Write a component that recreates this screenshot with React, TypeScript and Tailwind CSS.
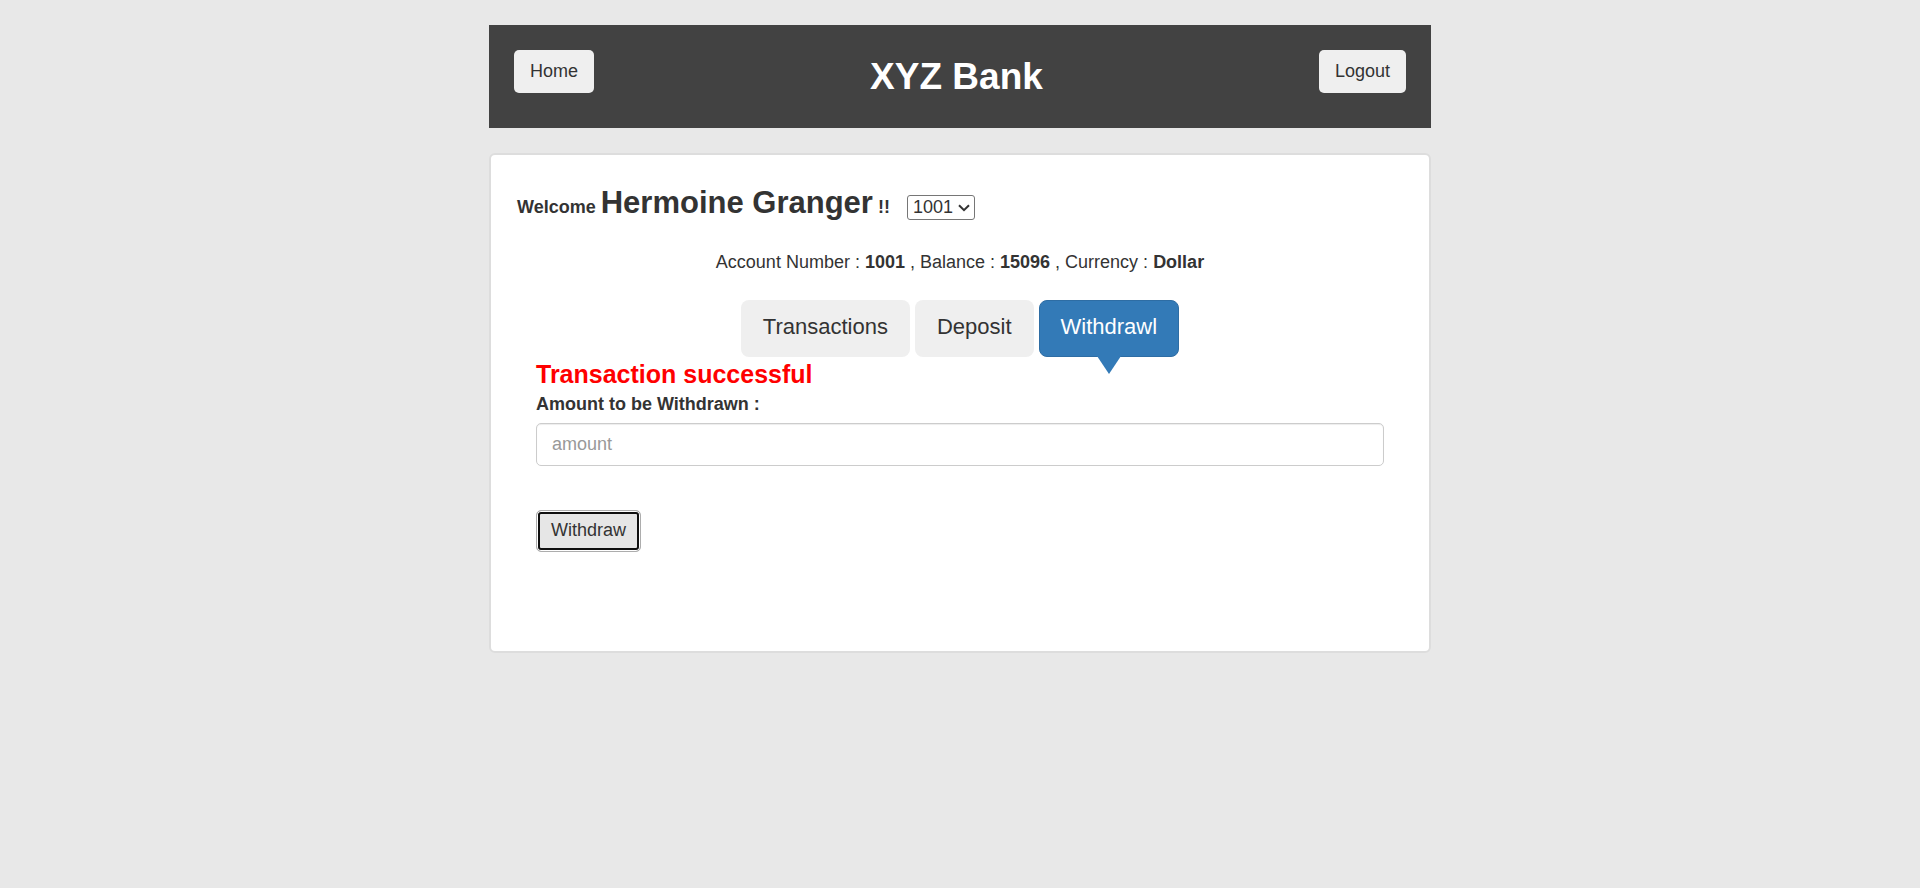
import { useState } from "react";
import clsx from "clsx";

const tabs = ["Transactions", "Deposit", "Withdrawl"];

function HeaderButton({ children }: { children: string }) {
  return (
    <button
      type="button"
      className="h-[43px] cursor-pointer rounded-[5px] bg-[#efefef] px-4 pb-0.5"
    >
      {children}
    </button>
  );
}

function Tab({ label, active, onSelect }: { label: string; active: boolean; onSelect: () => void }) {
  return (
    <button
      type="button"
      onClick={onSelect}
      className={clsx(
        "relative h-[57px] cursor-pointer rounded-lg pb-1 text-[22px]",
        active ? "border border-[#2e6da4] bg-[#337ab7] px-[21px] text-white" : "bg-[#efefef] px-[22px]",
      )}
    >
      {label}
      {active && (
        <span className="absolute top-full left-1/2 -translate-x-1/2 border-x-12 border-t-18 border-x-transparent border-t-[#337ab7]" />
      )}
    </button>
  );
}

export default function App() {
  const [active, setActive] = useState("Withdrawl");
  const [account, setAccount] = useState("1001");

  return (
    <div className="min-h-screen bg-[#e8e8e8] py-[25px] font-['Liberation_Sans',Arial,sans-serif] text-[18px] leading-6 text-[#333]">
      <div className="mx-auto flex max-w-[942px] flex-col gap-[25px]">
        <header className="flex items-start justify-between bg-[#424242] p-[25px]">
          <HeaderButton>Home</HeaderButton>
          <h1 className="text-[37px] leading-[53px] font-bold text-white">XYZ Bank</h1>
          <HeaderButton>Logout</HeaderButton>
        </header>

        <main className="rounded-md border-2 border-[#ddd] bg-white pt-[26px] pb-[99px]">
          <div className="flex items-baseline px-[26px] font-bold">
            <p className="leading-[44px]">
              Welcome <span className="text-[31px]">Hermoine Granger</span> !!
            </p>
            <span className="relative ml-[17px]">
              <select
                aria-label="Account number"
                value={account}
                onChange={(e) => setAccount(e.target.value)}
                className="h-[25px] w-[68px] appearance-none rounded-[3px] border border-[#767676] bg-white pl-[5px] leading-[23px] font-normal"
              >
                <option>1001</option>
                <option>1002</option>
                <option>1003</option>
              </select>
              <svg
                viewBox="0 0 12 8"
                aria-hidden="true"
                className="pointer-events-none absolute top-1/2 right-[5px] h-2 w-3 -translate-y-1/2 fill-none stroke-[#333] stroke-2"
              >
                <path d="M1 1.2 6 6.2 11 1.2" />
              </svg>
            </span>
          </div>

          <p className="mt-[21px] text-center">
            Account Number : <strong>1001</strong> , Balance : <strong>15096</strong> , Currency :{" "}
            <strong>Dollar</strong>
          </p>

          <nav className="mt-[26px] flex justify-center gap-[5px]">
            {tabs.map((label) => (
              <Tab key={label} label={label} active={label === active} onSelect={() => setActive(label)} />
            ))}
          </nav>

          <form className="flex flex-col items-start px-[45px]" onSubmit={(e) => e.preventDefault()}>
            <p className="text-[25px] leading-[35px] font-bold text-[#f00]">Transaction successful</p>
            <label htmlFor="amount" className="mb-[7px] font-bold">
              Amount to be Withdrawn :
            </label>
            <input
              id="amount"
              type="text"
              inputMode="numeric"
              placeholder="amount"
              className="h-[43px] w-full rounded-[5px] border border-[#ccc] px-[15px] shadow-[inset_0_1px_1px_rgba(0,0,0,0.075)] placeholder:text-[#999]"
            />
            <button
              type="submit"
              className="mt-11 h-[42px] cursor-pointer rounded-[5px] border border-[#adadad] bg-[#e6e6e6] px-[14px] pb-0.5 shadow-[inset_0_0_0_1px_#fff,inset_0_0_0_3px_#101010]"
            >
              Withdraw
            </button>
          </form>
        </main>
      </div>
    </div>
  );
}
